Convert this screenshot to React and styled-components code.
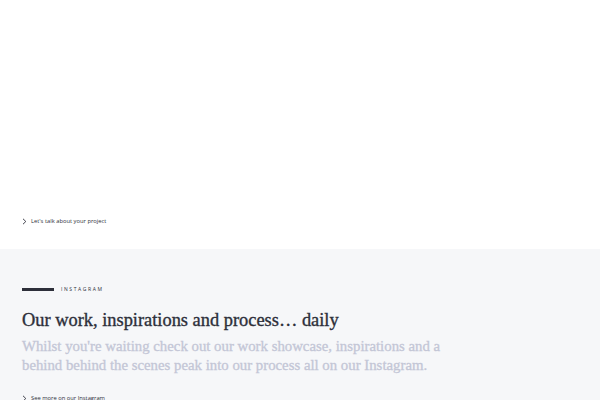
import React from "react";
import styled, { createGlobalStyle } from "styled-components";

const Global = createGlobalStyle`
  html, body { margin: 0; padding: 0; background: #ffffff; }
  body { font-family: "Open Sans", "Liberation Sans", sans-serif; }
`;

const Page = styled.div`
  width: 600px;
  height: 400px;
  overflow: hidden;
  display: flex;
  flex-direction: column;
`;

const Hero = styled.section`
  height: 249px;
  flex-shrink: 0;
  background: #ffffff;
  display: flex;
  flex-direction: column;
  justify-content: flex-end;
  padding: 0 22px 24px;
  box-sizing: border-box;
`;

const TextLink = styled.a`
  display: flex;
  align-items: center;
  gap: 4px;
  font-size: 5.8px;
  color: #2d2f3a;
  text-decoration: none;
  line-height: 8px;
`;

const Chevron = () => (
  <svg width="5" height="7" viewBox="0 0 5 7" fill="none">
    <path d="M1 0.8 L3.8 3.5 L1 6.2" stroke="#2d2f3a" strokeWidth="0.9" />
  </svg>
);

const Insta = styled.section`
  flex: 1;
  min-height: 0;
  background: #f6f7f9;
  padding: 37px 22px 0;
  display: flex;
  flex-direction: column;
`;

const Eyebrow = styled.div`
  display: flex;
  align-items: center;
  gap: 7px;
`;

const Bar = styled.span`
  width: 32px;
  height: 3px;
  background: #2d2f3a;
`;

const Label = styled.span`
  font-size: 5px;
  letter-spacing: 1.6px;
  color: #2d2f3a;
  text-transform: uppercase;
`;

const Heading = styled.h2`
  margin: 16px 0 0;
  font-family: "Liberation Serif", serif;
  font-weight: 400;
  font-size: 18.4px;
  line-height: 24px;
  color: #2d2f3a;
  -webkit-text-stroke: 0.35px #2d2f3a;
`;

const Lead = styled.p`
  margin: 5px 0 0;
  width: 450px;
  font-family: "Liberation Serif", serif;
  font-size: 14.8px;
  line-height: 19px;
  color: #c3c6d6;
  -webkit-text-stroke: 0.3px #c3c6d6;
`;

const Footer = styled.div`
  margin-top: 19px;
`;

export default function App() {
  return (
    <>
      <Global />
      <Page>
        <Hero>
          <TextLink href="#">
            <Chevron />
            Let's talk about your project
          </TextLink>
        </Hero>
        <Insta>
          <Eyebrow>
            <Bar />
            <Label>Instagram</Label>
          </Eyebrow>
          <Heading>Our work, inspirations and process… daily</Heading>
          <Lead>
            Whilst you're waiting check out our work showcase, inspirations and a
            behind behind the scenes peak into our process all on our Instagram.
          </Lead>
          <Footer>
            <TextLink href="#">
              <Chevron />
              See more on our Instagram
            </TextLink>
          </Footer>
        </Insta>
      </Page>
    </>
  );
}
